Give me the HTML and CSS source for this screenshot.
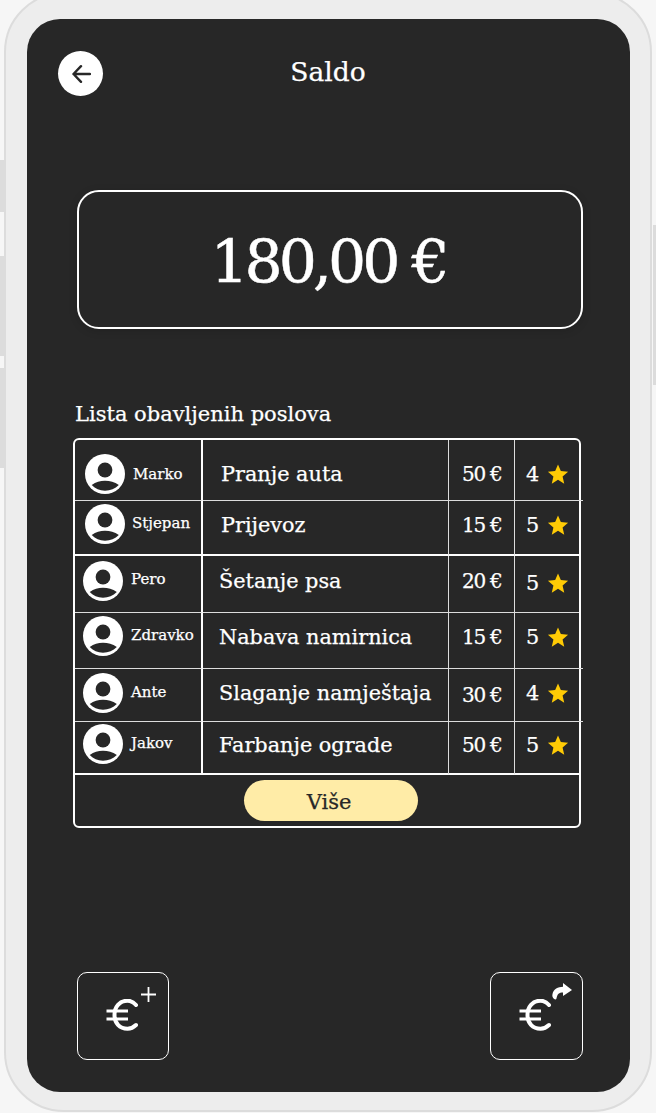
FILE: index.html
```html
<!DOCTYPE html>
<html lang="hr">
<head>
<meta charset="utf-8">
<title>Saldo</title>
<link rel="stylesheet" href="styles.css">
</head>
<body>
<svg class="defs" width="0" height="0" aria-hidden="true">
  <defs>
    <symbol id="avatar" viewBox="0 0 40 40">
      <circle cx="20" cy="20" r="20" fill="#fff"/>
      <circle cx="20" cy="16" r="7.400" fill="#272727"/>
      <path d="M6.700 31C11 28 15 26.700 20 26.700S29.500 28 33.800 31C30 34.800 25.500 36.700 20 36.700S10.500 34.800 6.700 31Z" fill="#272727"/>
    </symbol>
    <symbol id="star" viewBox="0 0 24 24">
      <path d="M12 1.500 15.100 8.800 23 9.500 17 14.700 18.800 22.500 12 18.400 5.200 22.500 7 14.700 1 9.500 8.900 8.800Z" fill="#ffcb05"/>
    </symbol>
    <symbol id="euro" viewBox="0 0 32 32">
      <path d="M30 6C27.500 3 24.500 1.700 21.500 1.700 13.500 1.700 8.500 8 8.500 16S13.500 29.700 21.500 29.700C24.500 29.700 27.500 28.500 30 26" fill="none" stroke="#fff" stroke-width="4" stroke-linecap="round"/>
      <path d="M.5 12H22M.5 20H22" stroke="#fff" stroke-width="2.800"/>
    </symbol>
  </defs>
</svg>
<div class="page">
  <span class="side side-a"></span>
  <span class="side side-b"></span>
  <span class="side side-c"></span>
  <span class="side side-d"></span>
  <main class="phone">
    <section class="screen">
      <header class="top">
        <button class="back" type="button" aria-label="Natrag">
          <svg width="20" height="20" viewBox="0 0 20 20"><path d="M19 10H2.500M10 2.200 2.500 10l7.500 7.800" fill="none" stroke="#272727" stroke-width="2.400" stroke-linecap="round" stroke-linejoin="round"/></svg>
        </button>
        <h1 class="title">Saldo</h1>
      </header>
      <div class="balance">180,00 €</div>
      <h2 class="list-title">Lista obavljenih poslova</h2>
      <div class="table">
        <div class="row r1 over thin">
          <div class="person"><svg class="avatar"><use href="#avatar"/></svg><span class="name">Marko</span></div>
          <div class="job">Pranje auta</div><div class="price">50 €</div>
          <div class="rate"><span>4</span><svg class="star"><use href="#star"/></svg></div>
        </div>
        <div class="row r2 thick">
          <div class="person"><svg class="avatar"><use href="#avatar"/></svg><span class="name n-up1">Stjepan</span></div>
          <div class="job">Prijevoz</div><div class="price">15 €</div>
          <div class="rate"><span>5</span><svg class="star"><use href="#star"/></svg></div>
        </div>
        <div class="row r3 thin shift">
          <div class="person"><svg class="avatar"><use href="#avatar"/></svg><span class="name n-up2">Pero</span></div>
          <div class="job">Šetanje psa</div><div class="price">20 €</div>
          <div class="rate"><span>5</span><svg class="star"><use href="#star"/></svg></div>
        </div>
        <div class="row r4 over thin shift">
          <div class="person"><svg class="avatar"><use href="#avatar"/></svg><span class="name n-up1">Zdravko</span></div>
          <div class="job">Nabava namirnica</div><div class="price">15 €</div>
          <div class="rate"><span>5</span><svg class="star"><use href="#star"/></svg></div>
        </div>
        <div class="row r5 over thin shift">
          <div class="person"><svg class="avatar"><use href="#avatar"/></svg><span class="name n-up1">Ante</span></div>
          <div class="job">Slaganje namještaja</div><div class="price p-down">30 €</div>
          <div class="rate"><span>4</span><svg class="star"><use href="#star"/></svg></div>
        </div>
        <div class="row r6 thick shift">
          <div class="person"><svg class="avatar"><use href="#avatar"/></svg><span class="name n-up1">Jakov</span></div>
          <div class="job">Farbanje ograde</div><div class="price">50 €</div>
          <div class="rate"><span>5</span><svg class="star"><use href="#star"/></svg></div>
        </div>
        <div class="more-row"><button class="more" type="button">Više</button></div>
      </div>
      <div class="actions">
        <button class="action" type="button" aria-label="Uplata">
          <svg class="euro" width="32" height="32"><use href="#euro"/></svg>
          <svg class="badge" width="15" height="15" viewBox="0 0 15 15"><path d="M7.500 0V15M0 7.500H15" stroke="#fff" stroke-width="1.800"/></svg>
        </button>
        <button class="action action-wide" type="button" aria-label="Isplata">
          <svg class="euro" width="32" height="32"><use href="#euro"/></svg>
          <svg class="badge badge-share" width="20" height="17" viewBox="0 0 20 17"><path d="M11 0 20 7 11 13V9.500C7 9.500 5.300 11 4.500 15.500 4.200 16.600 3 16.800 2.200 16 .5 14.800 0 13 .5 11 1.500 6 6 4 11 3.800Z" fill="#fff"/></svg>
        </button>
      </div>
    </section>
  </main>
</div>
</body>
</html>
```
FILE: styles.css
```css
* { box-sizing: border-box; }
html, body { margin: 0; padding: 0; }
body {
  width: 656px;
  height: 1113px;
  overflow: hidden;
  background: #f6f6f6;
  font-family: "DejaVu Serif", "Liberation Serif", serif;
  color: #fff;
  -webkit-text-stroke: .25px currentColor;
}
.defs { position: absolute; }
.page { position: relative; width: 656px; height: 1113px; padding: 0 4px; overflow: hidden; }
.side { position: absolute; width: 4px; background: #dcdcdc; }
.side-a { left: 0; top: 160px; height: 52px; }
.side-b { left: 0; top: 256px; height: 100px; }
.side-c { left: 0; top: 368px; height: 100px; }
.side-d { right: 0; top: 225px; width: 3px; height: 160px; }
.phone {
  width: 648px;
  height: 1120px;
  margin-top: -8px;
  padding: 25px 20px 20px 21px;
  background: #ededed;
  border: 2px solid #dcdcdc;
  border-radius: 60px;
}
.screen {
  height: 1073px;
  background: #272727;
  border-radius: 33px;
  padding: 32px 46px 0 46px;
  display: flex;
  flex-direction: column;
}
.top { display: flex; align-items: center; height: 45px; position: relative; margin-left: -15px; }
.back {
  width: 45px; height: 45px; border: 0; border-radius: 50%; background: #fff; padding: 0;
  display: flex; align-items: center; justify-content: center;
}
.title {
  position: absolute; left: 0; right: -14px; top: 1px; margin: 0; text-align: center;
  font-size: 26.500px; font-weight: 400; line-height: 40px;
}
.balance {
  margin: 94px 0 0 4px;
  width: 506px; height: 139px;
  padding: 4px 4px 0 0;
  border: 2px solid #fff;
  border-radius: 22px;
  display: flex; align-items: center; justify-content: center;
  font-size: 60px; line-height: 1; letter-spacing: -4px;
  -webkit-text-stroke: .5px currentColor;
  box-shadow: 0 2px 8px rgba(0,0,0,.15);
}
.list-title { margin: 72px 0 11px 2px; font-size: 21px; font-weight: 400; line-height: 26px; height: 26px; white-space: nowrap; }
.table {
  width: 508px;
  height: 390px;
  border: 2px solid #fff;
  border-radius: 6px;
  display: grid;
  grid-template-rows: 61px 55px 57px 56px 53px 53px 1fr;
}
.row { display: grid; grid-template-columns: 128px 246px 66px 64px; font-size: 20.800px; line-height: 40px; }
.row > * { border-right: 1px solid #ddd; }
.row > .person { border-right: 2px solid #fff; }
.row > .rate { border-right: 0; }
.thin > * { border-bottom: 1px solid #ddd; }
.thick > * { border-bottom: 2px solid #fff; }
.over { margin-right: -4px; grid-template-columns: 128px 246px 66px 68px; }
.r1 > * { padding-top: 14px; }
.r2 > * { padding-top: 3px; }
.r2 > .job, .r2 > .price, .r2 > .rate { padding-top: 4px; }
.r3 > * { padding-top: 5px; }
.r3 > .rate { padding-top: 7px; }
.r4 > * { padding-top: 3px; }
.r4 > .job, .r4 > .price, .r4 > .rate { padding-top: 4px; }
.r5 > * { padding-top: 4px; }
.r6 > * { padding-top: 2px; }
.r6 > .job, .r6 > .price, .r6 > .rate { padding-top: 3px; }
.person { display: flex; align-items: flex-start; padding-left: 10px; }
.shift .person { padding-left: 8px; }
.avatar { width: 40px; height: 40px; flex: none; }
.name { font-size: 15px; margin-left: 8px; white-space: nowrap; }
.r2 .name { margin-left: 7px; }
.n-up1 { margin-top: -1px; }
.n-up2 { margin-top: -2px; }
.job { padding-left: 18px; white-space: nowrap; }
.shift.row .job { padding-left: 16px; }
.price { padding-left: 13px; white-space: nowrap; font-size: 20px; letter-spacing: -1.300px; }
.p-down { line-height: 44px; }
.rate { display: flex; align-items: flex-start; padding-left: 11px; }
.star { width: 22px; height: 22px; margin: 9px 0 0 8px; flex: none; }
.more-row { display: flex; justify-content: center; padding-top: 5px; }
.more {
  width: 174px; height: 41px; border: 0; border-radius: 21px;
  background: #ffeca7; color: #272727; font: inherit; font-size: 21px; padding: 2px 3px 0 0;
  margin-left: 7px;
}
.actions { display: flex; justify-content: space-between; margin: 144px 0 0 4px; width: 506px; }
.action {
  position: relative; width: 92px; height: 88px; padding: 0; background: transparent;
  border: 1px solid #fff; border-radius: 10px;
}
.action-wide { width: 93px; }
.euro { position: absolute; left: 28px; top: 26px; }
.badge { position: absolute; left: 63px; top: 14px; }
.badge-share { left: 61px; top: 10px; }
```
